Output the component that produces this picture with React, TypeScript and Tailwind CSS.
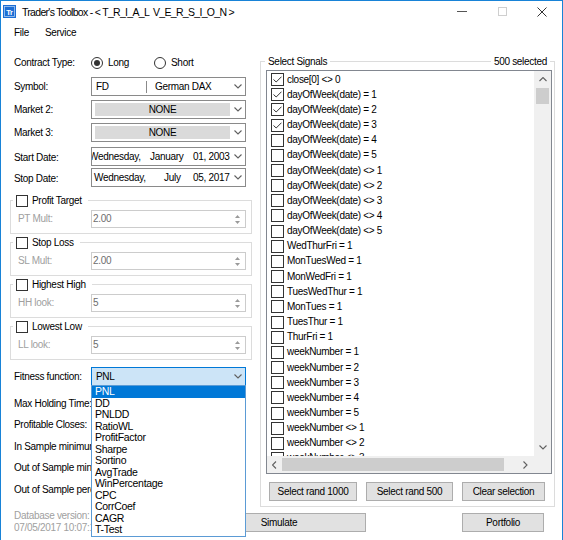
import React from 'react';

const SIGNALS: [string, boolean][] = [
  ['close[0] <> 0', true],
  ['dayOfWeek(date) = 1', true],
  ['dayOfWeek(date) = 2', true],
  ['dayOfWeek(date) = 3', true],
  ['dayOfWeek(date) = 4', false],
  ['dayOfWeek(date) = 5', false],
  ['dayOfWeek(date) <> 1', false],
  ['dayOfWeek(date) <> 2', false],
  ['dayOfWeek(date) <> 3', false],
  ['dayOfWeek(date) <> 4', false],
  ['dayOfWeek(date) <> 5', false],
  ['WedThurFri = 1', false],
  ['MonTuesWed = 1', false],
  ['MonWedFri = 1', false],
  ['TuesWedThur = 1', false],
  ['MonTues = 1', false],
  ['TuesThur = 1', false],
  ['ThurFri = 1', false],
  ['weekNumber = 1', false],
  ['weekNumber = 2', false],
  ['weekNumber = 3', false],
  ['weekNumber = 4', false],
  ['weekNumber = 5', false],
  ['weekNumber <> 1', false],
  ['weekNumber <> 2', false],
  ['weekNumber <> 3', false],
];

const FITNESS = ['PNL', 'DD', 'PNLDD', 'RatioWL', 'ProfitFactor', 'Sharpe', 'Sortino', 'AvgTrade', 'WinPercentage', 'CPC', 'CorrCoef', 'CAGR', 'T-Test'];

const Arrow = ({ dir, color = '#606060' }: { dir: 'up' | 'down' | 'left' | 'right'; color?: string }) => {
  const d = {
    down: 'M0.5 0.5 L4 4 L7.5 0.5',
    up: 'M0.5 4 L4 0.5 L7.5 4',
    left: 'M4 0.5 L0.5 4 L4 7.5',
    right: 'M0.5 0.5 L4 4 L0.5 7.5',
  }[dir];
  const horiz = dir === 'left' || dir === 'right';
  return (
    <svg width={horiz ? 5 : 8} height={horiz ? 8 : 5} viewBox={horiz ? '0 0 5 8' : '0 0 8 5'}>
      <path d={d} fill="none" stroke={color} strokeWidth="1.1" />
    </svg>
  );
};

const CheckBox = ({ checked = false, small = false }: { checked?: boolean; small?: boolean }) => (
  <span
    className={`${small ? 'w-[12px] h-[12px]' : 'w-[13px] h-[13px]'} shrink-0 border border-[#333] bg-white flex items-center justify-center`}
  >
    {checked && (
      <svg width="9" height="7" viewBox="0 0 9 7">
        <path d="M0.5 3.5 L3.2 6 L8.5 0.7" fill="none" stroke="#333" strokeWidth="1" />
      </svg>
    )}
  </span>
);

const Radio = ({ checked = false }: { checked?: boolean }) => (
  <span className="w-[12px] h-[12px] shrink-0 rounded-full border border-[#333] bg-white flex items-center justify-center">
    {checked && <span className="w-[6px] h-[6px] rounded-full bg-[#333]" />}
  </span>
);

const Combo = ({ children, className = '' }: { children: React.ReactNode; className?: string }) => (
  <div className={`w-[155px] h-[19px] border border-[#8a8a8a] bg-white flex items-center ${className}`}>
    <div className="flex-1 min-w-0 h-full flex items-center overflow-hidden whitespace-nowrap">{children}</div>
    <div className="w-[15px] flex items-center justify-center">
      <Arrow dir="down" />
    </div>
  </div>
);

const Numeric = ({ value }: { value: string }) => (
  <div className="w-[155px] h-[18px] border border-[#cccccc] bg-white flex items-center">
    <span className="flex-1 pl-[1px] text-[#6d6d6d]">{value}</span>
    <div className="w-[15px] h-full flex flex-col items-center justify-center gap-[3px]">
      <svg width="5" height="3" viewBox="0 0 5 3">
        <path d="M0 3 L2.5 0 L5 3Z" fill="#9a9a9a" />
      </svg>
      <svg width="5" height="3" viewBox="0 0 5 3">
        <path d="M0 0 L2.5 3 L5 0Z" fill="#9a9a9a" />
      </svg>
    </div>
  </div>
);

const Group = ({ title, label, value, className = 'mt-[8px]' }: { title: string; label: string; value: string; className?: string }) => (
  <div className={`ml-[9px] w-[242px] h-[34px] border border-[#dcdcdc] ${className}`}>
    <div className="-mt-[7px] ml-[2px] w-fit h-[13px] bg-white pl-[3px] pr-[6px] flex items-center gap-[4px]">
      <CheckBox small />
      <span>{title}</span>
    </div>
    <div className="mt-[3px] flex items-center">
      <span className="w-[80px] pl-[7px] text-[#a0a0a0]">{label}</span>
      <Numeric value={value} />
    </div>
  </div>
);

const Button = ({ children, className = '' }: { children: React.ReactNode; className?: string }) => (
  <div className={`h-[19px] border border-[#adadad] bg-[#e1e1e1] flex items-center justify-center ${className}`}>{children}</div>
);

const FormRow = ({ label, children, className = '' }: { label: string; children: React.ReactNode; className?: string }) => (
  <div className={`flex items-center pl-[13px] ${className}`}>
    <span className="w-[77px]">{label}</span>
    {children}
  </div>
);

export default function App() {
  return (
    <div className="w-[563px] h-[540px] relative overflow-hidden bg-white border-x border-t border-[#1883d7] font-['Liberation_Sans',Arial,sans-serif] text-[10px] tracking-[-0.3px] text-black leading-none">
      {/* title bar */}
      <div className="h-[21px] flex items-center">
        <svg width="13" height="13" viewBox="0 0 13 13" className="ml-[2px]">
          <rect x="0" y="0" width="13" height="13" fill="#1c6ed4" />
          <rect x="1.5" y="1.5" width="10" height="10" fill="none" stroke="#a9cbf2" strokeWidth="0.8" />
          <text x="6.5" y="9.6" textAnchor="middle" fontSize="7.5" fontWeight="bold" fill="white" fontFamily="Liberation Sans, sans-serif">
            Tr
          </text>
        </svg>
        <span className="ml-[6px] text-[10.5px] leading-[14px] tracking-[-0.7px] whitespace-pre">{"Trader's Toolbox - < T_R_I_A_L  V_E_R_S_I_O_N >"}</span>
        <div className="flex-1" />
        <div className="w-[40px] h-full flex items-center justify-center">
          <span className="w-[10px] h-[1px] bg-[#555]" />
        </div>
        <div className="w-[40px] h-full flex items-center justify-center">
          <span className="w-[9px] h-[9px] border border-[#cfcfcf]" />
        </div>
        <div className="w-[40px] h-full flex items-center justify-center">
          <svg width="10" height="10" viewBox="0 0 10 10">
            <path d="M0.5 0.5 L9.5 9.5 M9.5 0.5 L0.5 9.5" stroke="#333" strokeWidth="1" />
          </svg>
        </div>
      </div>

      {/* menu */}
      <div className="h-[22px] flex items-center pl-[13px] gap-[16px]">
        <span>File</span>
        <span>Service</span>
      </div>

      {/* main */}
      <div className="flex">
        <div className="w-[253px] flex flex-col">
          <FormRow label="Contract Type:" className="mt-[10px] h-[18px]">
            <Radio checked />
            <span className="ml-[5px] w-[46px]">Long</span>
            <Radio />
            <span className="ml-[5px]">Short</span>
          </FormRow>

          <FormRow label="Symbol:" className="mt-[5px]">
            <Combo>
              <span className="pl-[4px] w-[54px]">FD</span>
              <span className="w-[1px] h-[12px] bg-[#8a8a8a]" />
              <span className="ml-[8px]">German DAX</span>
            </Combo>
          </FormRow>

          <FormRow label="Market 2:" className="mt-[4px]">
            <Combo>
              <span className="ml-[3px] flex-1 h-[13px] bg-[#dadada] flex items-center justify-center">NONE</span>
            </Combo>
          </FormRow>

          <FormRow label="Market 3:" className="mt-[4px]">
            <Combo>
              <span className="ml-[3px] flex-1 h-[13px] bg-[#dadada] flex items-center justify-center">NONE</span>
            </Combo>
          </FormRow>

          <FormRow label="Start Date:" className="mt-[5px] [&>span:first-child]:pt-[3px]">
            <Combo>
              <span className="-ml-[3px] w-[61px] shrink-0">Wednesday,</span>
              <span className="w-[43px] shrink-0">January</span>
              <span className="shrink-0">01, 2003</span>
            </Combo>
          </FormRow>

          <FormRow label="Stop Date:" className="mt-[2px] [&>span:first-child]:pt-[3px]">
            <Combo>
              <span className="ml-[2px] w-[70px] shrink-0">Wednesday,</span>
              <span className="w-[29px] shrink-0">July</span>
              <span className="shrink-0">05, 2017</span>
            </Combo>
          </FormRow>

          <Group title="Profit Target" label="PT Mult:" value="2.00" className="mt-[13px]" />
          <Group title="Stop Loss" label="SL Mult:" value="2.00" />
          <Group title="Highest High" label="HH look:" value="5" />
          <Group title="Lowest Low" label="LL look:" value="5" />

          <FormRow label="Fitness function:" className="mt-[7px]">
            <Combo className="!border-[#0078d7] !bg-[#cce4f7]">
              <span className="pl-[4px]">PNL</span>
            </Combo>
          </FormRow>

          {/* labels whose controls sit under the open dropdown */}
          <div className="mt-[7px] pl-[13px] flex flex-col whitespace-nowrap">
            {['Max Holding Time:', 'Profitable Closes:', 'In Sample minimum trades:', 'Out of Sample minimum trades:', 'Out of Sample percentage:'].map((t) => (
              <div key={t} className="w-[77px] h-[21.5px] flex items-center overflow-hidden">
                {t}
              </div>
            ))}
          </div>
        </div>

        {/* select signals group */}
        <div className="ml-[6px] mt-[17px] w-[295px] h-[446px] border border-[#dcdcdc] flex flex-col">
          <div className="-mt-[7px] h-[13px] flex items-center justify-between">
            <span className="ml-[4px] px-[3px] bg-white">Select Signals</span>
            <span className="mr-[4px] px-[3px] bg-white">500 selected</span>
          </div>

          <div className="mt-[2px] ml-[5px] w-[286px] h-[404px] border border-[#828790] flex flex-col">
            <div className="flex h-[385px]">
              <div className="w-[267px] overflow-hidden pt-[1px]">
                {SIGNALS.map(([s, c]) => (
                  <div key={s} className="h-[15.17px] flex items-center pl-[4px] gap-[3px] whitespace-nowrap">
                    <CheckBox checked={c} />
                    <span>{s}</span>
                  </div>
                ))}
              </div>
              <div className="w-[17px] flex flex-col bg-[#f0f0f0]">
                <div className="h-[17px] flex items-center justify-center">
                  <Arrow dir="up" />
                </div>
                <div className="mx-[2px] h-[16px] bg-[#cdcdcd]" />
                <div className="flex-1" />
                <div className="h-[17px] flex items-center justify-center">
                  <Arrow dir="down" />
                </div>
              </div>
            </div>
            <div className="flex h-[17px]">
              <div className="w-[267px] flex bg-[#f0f0f0]">
                <div className="w-[15px] flex items-center justify-center">
                  <Arrow dir="left" />
                </div>
                <div className="my-[2px] w-[222px] bg-[#cdcdcd]" />
                <div className="flex-1" />
                <div className="w-[17px] flex items-center justify-center">
                  <Arrow dir="right" />
                </div>
              </div>
              <div className="w-[17px] bg-[#f0f0f0]" />
            </div>
          </div>

          <div className="mt-[8px] pl-[8px] flex gap-[9px]">
            <Button className="w-[88px]">Select rand 1000</Button>
            <Button className="w-[87px]">Select rand 500</Button>
            <Button className="w-[83px]">Clear selection</Button>
          </div>
        </div>
      </div>

      {/* bottom row */}
      <div className="mt-[3px] pl-[13px] flex">
        <div className="w-[178px] text-[#a0a0a0] leading-[12px] whitespace-nowrap">
          <div className="w-[77px] overflow-hidden">Database version:</div>
          <div className="w-[77px] overflow-hidden">07/05/2017 10:07:12</div>
        </div>
        <Button className="mt-[3px] w-[174px]">Simulate</Button>
        <Button className="mt-[3px] ml-[96px] w-[82px]">Portfolio</Button>
      </div>

      {/* fitness dropdown */}
      <div className="absolute left-[90px] top-[384px] w-[155px] border border-[#5b9bd5] bg-white">
        {FITNESS.map((f, i) => (
          <div
            key={f}
            className={`h-[11.5px] leading-[11.5px] pl-[3px] text-[10.5px] ${i === 0 ? 'bg-[#0078d7] text-white' : ''}`}
          >
            {f}
          </div>
        ))}
      </div>
    </div>
  );
}
